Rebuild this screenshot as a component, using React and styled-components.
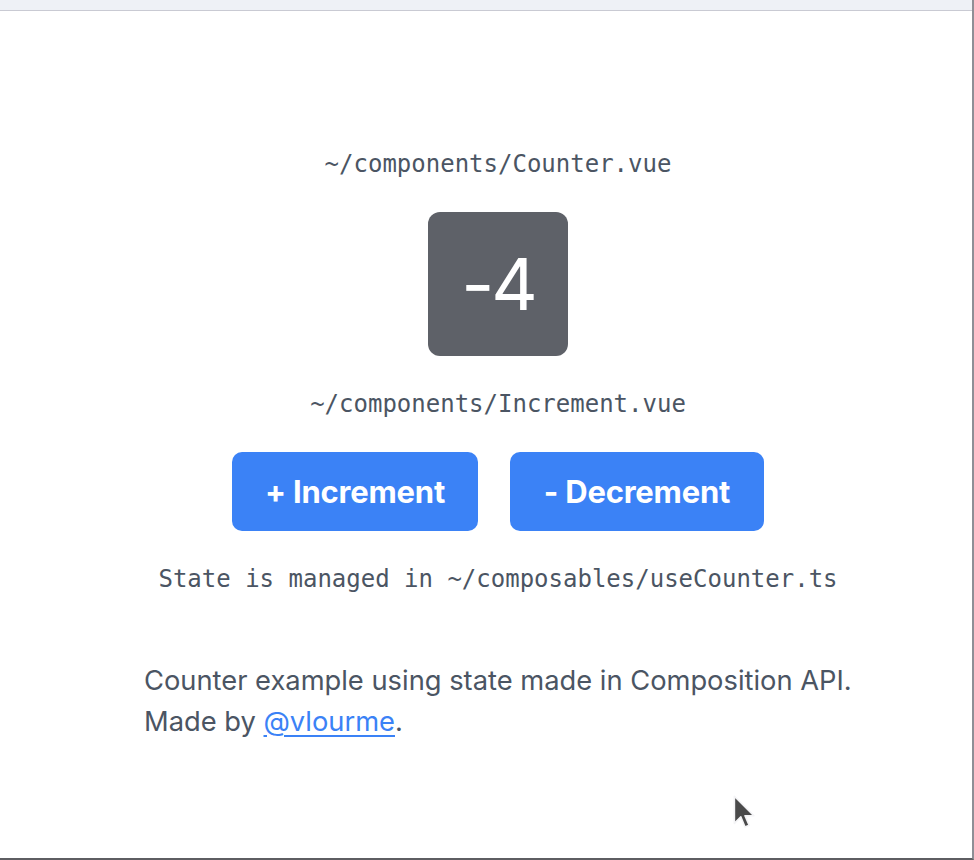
import React from "react";
import styled, { createGlobalStyle } from "styled-components";

const Global = createGlobalStyle`
  html, body { margin: 0; padding: 0; background: #ffffff; }
  body { font-family: Inter, "Noto Sans", sans-serif; }
`;

const Frame = styled.div`
  position: relative;
  box-sizing: border-box;
  width: 974px;
  height: 860px;
  border-right: 2px solid #8e8f96;
  border-bottom: 2px solid #5e5e62;
  overflow: hidden;
  display: flex;
  flex-direction: column;
`;

const TopBar = styled.div`
  height: 10px;
  flex: none;
  background: #eef1f6;
  border-bottom: 1px solid #c9cad3;
`;

const Main = styled.main`
  display: flex;
  flex-direction: column;
  align-items: center;
  padding: 137px 0 0 24px;
`;

const FileLabel = styled.div`
  font-family: "DejaVu Sans Mono", "Liberation Mono", monospace;
  font-size: 24px;
  line-height: 32px;
  color: #4b5563;
  margin-top: ${(p) => p.$mt || 0}px;
`;

const CountBox = styled.div`
  margin-top: 32px;
  width: 140px;
  height: 144px;
  border-radius: 12px;
  background: #5e6168;
  color: #ffffff;
  display: flex;
  align-items: center;
  justify-content: center;
  font-family: Inter, "Noto Sans", sans-serif;
  font-size: 72px;
  font-weight: 400;
  line-height: 1;
  letter-spacing: -3px;
`;

const ButtonRow = styled.div`
  display: flex;
  gap: 32px;
  margin-top: 32px;
`;

const Button = styled.button`
  border: none;
  border-radius: 10px;
  background: #3b82f6;
  color: #ffffff;
  font-family: Inter, "Noto Sans", sans-serif;
  font-weight: 700;
  font-size: 31px;
  letter-spacing: -0.2px;
  line-height: 36px;
  height: 79px;
  width: ${(p) => p.$w}px;
  padding: 0;
  cursor: pointer;
`;

const Note = styled.p`
  margin: 0;
  width: 708px;
  font-family: Inter, "Noto Sans", sans-serif;
  font-size: 27.3px;
  line-height: 41px;
  color: #4b5563;
  margin-top: 65px;
`;

const Link = styled.a`
  color: #3b82f6;
  text-decoration: underline;
  text-underline-offset: 4px;
  text-decoration-thickness: 2px;
`;

const Cursor = styled.svg`
  position: absolute;
  left: 732px;
  top: 795px;
`;

export default function App() {
  return (
    <>
      <Global />
      <Frame>
        <TopBar />
        <Main>
          <FileLabel>~/components/Counter.vue</FileLabel>
          <CountBox>-4</CountBox>
          <FileLabel $mt={32}>~/components/Increment.vue</FileLabel>
          <ButtonRow>
            <Button $w={246}>+ Increment</Button>
            <Button $w={254}>- Decrement</Button>
          </ButtonRow>
          <FileLabel $mt={32}>State is managed in ~/composables/useCounter.ts</FileLabel>
          <Note>
            Counter example using state made in Composition API.
            <br />
            Made by <Link href="#">@vlourme</Link>.
          </Note>
        </Main>
        <Cursor width="26" height="38" viewBox="0 0 22 32">
          <path d="M2 1 L2 24 L7.5 18.5 L11 27 L14.5 25.5 L11 17.5 L18.5 17.5 Z" fill="#4a4a4a" stroke="#f4f4f6" strokeWidth="1.4" strokeLinejoin="round" />
        </Cursor>
      </Frame>
    </>
  );
}
